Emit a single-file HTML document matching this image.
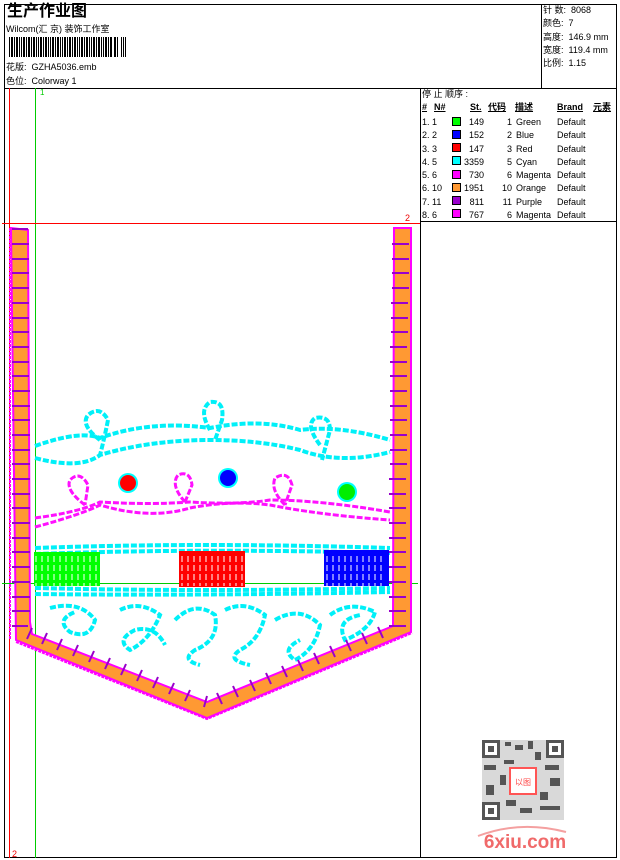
<!DOCTYPE html>
<html><head><meta charset="utf-8"><style>
*{margin:0;padding:0}
body{width:620px;height:860px;background:#fff;position:relative;overflow:hidden;font-family:"Liberation Sans","Noto Sans CJK SC",sans-serif;font-size:9px;color:#000}
.t{position:absolute;white-space:nowrap;line-height:11px}
svg{position:absolute;left:0;top:0}
</style></head><body>
<svg width="620" height="860" viewBox="0 0 620 860" shape-rendering="crispEdges">
<g fill="none" stroke="#000" stroke-width="1">
<rect x="4.5" y="4.5" width="612" height="853"/>
<line x1="4" y1="88.5" x2="617" y2="88.5"/>
<line x1="541.5" y1="4" x2="541.5" y2="88"/>
<line x1="420.5" y1="88" x2="420.5" y2="858"/>
<line x1="420" y1="221.5" x2="617" y2="221.5"/>
</g>
<line x1="9.5" y1="88" x2="9.5" y2="858" stroke="#f00"/>
<line x1="35.5" y1="88" x2="35.5" y2="858" stroke="#0c0"/>
<line x1="2" y1="223.5" x2="420" y2="223.5" stroke="#f00"/>
<line x1="2" y1="583.5" x2="418" y2="583.5" stroke="#0c0"/>
<g fill="#000">
<rect x="9" y="37" width="1" height="20"/><rect x="11" y="37" width="2" height="20"/><rect x="14" y="37" width="1" height="20"/><rect x="16" y="37" width="2" height="20"/><rect x="19" y="37" width="1" height="20"/><rect x="21" y="37" width="1" height="20"/><rect x="23" y="37" width="2" height="20"/><rect x="26" y="37" width="1" height="20"/><rect x="28" y="37" width="2" height="20"/><rect x="31" y="37" width="1" height="20"/><rect x="33" y="37" width="2" height="20"/><rect x="36" y="37" width="1" height="20"/><rect x="38" y="37" width="1" height="20"/><rect x="40" y="37" width="2" height="20"/><rect x="43" y="37" width="1" height="20"/><rect x="45" y="37" width="2" height="20"/><rect x="48" y="37" width="1" height="20"/><rect x="50" y="37" width="1" height="20"/><rect x="52" y="37" width="2" height="20"/><rect x="55" y="37" width="1" height="20"/><rect x="57" y="37" width="2" height="20"/><rect x="60" y="37" width="1" height="20"/><rect x="62" y="37" width="1" height="20"/><rect x="64" y="37" width="2" height="20"/><rect x="67" y="37" width="1" height="20"/><rect x="69" y="37" width="2" height="20"/><rect x="72" y="37" width="1" height="20"/><rect x="74" y="37" width="2" height="20"/><rect x="77" y="37" width="1" height="20"/><rect x="79" y="37" width="1" height="20"/><rect x="81" y="37" width="2" height="20"/><rect x="84" y="37" width="1" height="20"/><rect x="86" y="37" width="2" height="20"/><rect x="89" y="37" width="1" height="20"/><rect x="91" y="37" width="1" height="20"/><rect x="93" y="37" width="2" height="20"/><rect x="96" y="37" width="1" height="20"/><rect x="98" y="37" width="2" height="20"/><rect x="101" y="37" width="1" height="20"/><rect x="103" y="37" width="1" height="20"/><rect x="105" y="37" width="2" height="20"/><rect x="108" y="37" width="1" height="20"/><rect x="110" y="37" width="2" height="20"/><rect x="114" y="37" width="2" height="20"/><rect x="117" y="37" width="1" height="20"/><rect x="121" y="37" width="1" height="20"/><rect x="123" y="37" width="1" height="20"/><rect x="125" y="37" width="1" height="20"/>
</g>
<g stroke="#000" stroke-width="1">
<rect x="452.5" y="117.5" width="8" height="8" fill="#00ff00"/>
<rect x="452.5" y="130.5" width="8" height="8" fill="#0000ff"/>
<rect x="452.5" y="143.5" width="8" height="8" fill="#ff0000"/>
<rect x="452.5" y="156.5" width="8" height="8" fill="#00ffff"/>
<rect x="452.5" y="170.5" width="8" height="8" fill="#ff00ff"/>
<rect x="452.5" y="183.5" width="8" height="8" fill="#ff9933"/>
<rect x="452.5" y="196.5" width="8" height="8" fill="#9900cc"/>
<rect x="452.5" y="209.5" width="8" height="8" fill="#ff00ff"/>
</g>
<g shape-rendering="auto">
<g fill="none" stroke="#00f0f8" stroke-width="4" stroke-dasharray="6 2">
<path d="M35 446 Q80 430 100 438 Q150 420 210 428 Q260 418 300 430 Q340 425 390 440"/>
<path d="M35 458 Q80 470 100 455 Q150 440 210 440 Q260 440 300 450 Q340 465 390 452"/>
<path d="M100 440 Q80 425 88 415 Q100 405 108 420 Q104 440 100 455"/>
<path d="M210 430 Q198 410 210 402 Q225 400 222 420 L215 440"/>
<path d="M320 445 Q305 425 315 418 Q330 415 330 430 L322 460"/>
<path d="M35 548 Q200 542 390 548 M35 554 Q200 548 390 553"/>
<path d="M35 588 Q200 592 390 588 M35 594 Q200 596 390 592"/>
<path d="M50 608 Q80 600 95 620 Q90 640 70 632 Q55 620 75 612"/>
<path d="M120 610 Q140 600 160 615 Q150 640 130 650 Q115 640 135 630 Q155 625 165 645"/>
<path d="M175 620 Q195 600 215 615 Q220 640 195 650 Q180 660 200 665"/>
<path d="M225 610 Q245 600 265 615 Q260 640 240 650 Q225 660 250 665"/>
<path d="M275 620 Q300 605 320 625 Q315 650 295 660 Q280 650 300 640"/>
<path d="M330 615 Q350 600 375 612 Q370 630 345 640 Q335 620 360 615"/>
</g>
<g fill="none" stroke="#ff10ff" stroke-width="3" stroke-dasharray="6 2">
<path d="M35 527 Q80 515 100 505 Q150 520 190 508 Q230 500 270 505 Q320 515 390 520"/>
<path d="M35 518 Q80 512 100 502 Q150 505 190 502 Q240 505 270 500 Q320 500 390 512"/>
<path d="M85 505 Q65 490 70 480 Q80 470 88 485 L85 505"/>
<path d="M185 502 Q170 485 178 475 Q190 470 192 485 L185 502"/>
<path d="M285 505 Q270 490 275 478 Q288 470 292 485 L285 505"/>
</g>
<circle cx="128" cy="483" r="10" fill="#00ffff"/><circle cx="128" cy="483" r="8" fill="#ff0000"/>
<circle cx="228" cy="478" r="10" fill="#00ffff"/><circle cx="228" cy="478" r="8" fill="#0000ff"/>
<circle cx="347" cy="492" r="10" fill="#00ffff"/><circle cx="347" cy="492" r="8" fill="#00ee00"/>
</g>
<rect x="34" y="552" width="66" height="34" fill="#00ff00"/>
<rect x="179" y="551" width="66" height="36" fill="#ff0000"/>
<rect x="324" y="550" width="65" height="36" fill="#0000ff"/>
<g stroke="#fff" stroke-width="1" stroke-dasharray="6 3">
<path d="M36 556V586M42 556V586M48 556V586M54 556V586M60 556V586M66 556V586M72 556V586M78 556V586M84 556V586M90 556V586M96 556V586"/>
<path d="M182 556V586M188 556V586M194 556V586M200 556V586M206 556V586M212 556V586M218 556V586M224 556V586M230 556V586M236 556V586M242 556V586"/>
<path d="M327 556V586M333 556V586M339 556V586M345 556V586M351 556V586M357 556V586M363 556V586M369 556V586M375 556V586M381 556V586"/>
</g>
<g shape-rendering="auto">
<path d="M11 228 L28 230 L30 622 L32 634 L207 702 L393 626 L394 228 L411 228 L411 632 L207 718 L16 640 Z" fill="#ff9933" stroke="#ff00ff" stroke-width="2"/>
<path d="M10 228 L10 640 M411 228 L411 632 M16 642 L207 719 L412 633" stroke="#ff00ff" stroke-width="2" fill="none" stroke-dasharray="3 1"/>
<g stroke="#9900cc" stroke-width="2">
<path d="M12 229h16M12 244h17M12 259h17M12 273h17M12 288h17M12 303h17M12 318h17M12 332h17M12 347h17M12 362h17M12 376h17M12 391h18M12 406h18M12 420h18M12 435h18M12 450h18M12 464h18M12 479h18M12 494h18M12 508h18M12 523h18M12 538h18M12 552h18M12 567h18M12 582h18M12 597h18M12 611h18M12 626h16"/>
<path d="M392 244h17M392 259h17M392 273h17M392 288h17M391 303h17M391 318h17M391 332h17M390 347h17M390 362h17M390 376h17M390 391h17M390 406h17M390 420h17M390 435h17M390 450h17M390 464h17M389 479h17M389 494h17M389 508h17M389 523h17M389 538h17M389 552h17M389 567h17M389 582h17M389 597h17M389 611h17M389 626h17"/>
<path d="M32 628l-5 11M47 633l-5 11M62 639l-5 11M78 645l-5 11M94 651l-5 11M110 658l-5 11M126 664l-5 11M142 670l-5 11M158 677l-5 11M174 683l-5 11M190 690l-5 11M207 696l-3 11"/>
<path d="M217 693l5 11M233 686l5 11M250 680l5 11M266 673l5 11M282 666l5 11M298 660l5 11M314 653l5 11M330 646l5 11M346 640l5 11M362 633l5 11M378 627l5 11"/>
</g>
</g>
<g fill="#555">
<rect x="482" y="740" width="82" height="80" fill="#666" opacity="0.25"/>
<rect x="482" y="740" width="18" height="18"/><rect x="485" y="743" width="12" height="12" fill="#fff"/><rect x="488" y="746" width="6" height="6"/>
<rect x="546" y="740" width="18" height="18"/><rect x="549" y="743" width="12" height="12" fill="#fff"/><rect x="552" y="746" width="6" height="6"/>
<rect x="482" y="802" width="18" height="18"/><rect x="485" y="805" width="12" height="12" fill="#fff"/><rect x="488" y="808" width="6" height="6"/>
<rect x="505" y="742" width="6" height="4"/><rect x="515" y="745" width="8" height="5"/><rect x="528" y="741" width="5" height="8"/><rect x="504" y="760" width="10" height="4"/><rect x="484" y="765" width="12" height="5"/><rect x="500" y="775" width="6" height="10"/><rect x="545" y="765" width="14" height="5"/><rect x="550" y="778" width="10" height="8"/><rect x="540" y="792" width="8" height="8"/><rect x="506" y="800" width="10" height="6"/><rect x="520" y="808" width="12" height="5"/><rect x="540" y="806" width="20" height="4"/><rect x="486" y="785" width="8" height="10"/><rect x="535" y="752" width="6" height="8"/>
</g>
<rect x="510" y="768" width="26" height="26" fill="#fff" stroke="#ff5555" stroke-width="2"/>
<text x="523" y="785" font-size="8" fill="#ff4444" text-anchor="middle" font-family="Noto Sans CJK SC">以图</text>
<path d="M478 836 Q520 820 566 832" stroke="#f4a0a0" stroke-width="2" fill="none" shape-rendering="auto"/>
<text x="525" y="848" font-size="19" font-weight="bold" fill="#f06a6a" text-anchor="middle" font-family="Liberation Sans">6xiu.com</text>
<text x="40" y="95" font-size="8" fill="#0c0">1</text>
<text x="405" y="221" font-size="9" fill="#e00">2</text>
<text x="12" y="857" font-size="9" fill="#e00">2</text>
</svg>
<div class="t" style="left:7px;top:3px;font-size:16px;line-height:18px;font-weight:bold">生产作业图</div>
<div class="t" style="left:6px;top:24px">Wilcom(汇 京) 装饰工作室</div>
<div class="t" style="left:6px;top:62px">花版:&nbsp; GZHA5036.emb</div>
<div class="t" style="left:6px;top:76px">色位:&nbsp; Colorway 1</div>
<div class="t" style="left:543px;top:5px">针 数:&nbsp; 8068</div>
<div class="t" style="left:543px;top:18px">颜色:&nbsp; 7</div>
<div class="t" style="left:543px;top:32px">高度:&nbsp; 146.9 mm</div>
<div class="t" style="left:543px;top:45px">宽度:&nbsp; 119.4 mm</div>
<div class="t" style="left:543px;top:58px">比例:&nbsp; 1.15</div>
<div class="t" style="left:422px;top:89px">停 止 顺序 :</div>
<div class="t" style="left:422px;top:102px;font-weight:bold;text-decoration:underline">#</div>
<div class="t" style="left:434px;top:102px;font-weight:bold;text-decoration:underline">N#</div>
<div class="t" style="left:470px;top:102px;font-weight:bold;text-decoration:underline">St.</div>
<div class="t" style="left:488px;top:102px;font-weight:bold;text-decoration:underline">代码</div>
<div class="t" style="left:515px;top:102px;font-weight:bold;text-decoration:underline">描述</div>
<div class="t" style="left:557px;top:102px;font-weight:bold;text-decoration:underline">Brand</div>
<div class="t" style="left:593px;top:102px;font-weight:bold;text-decoration:underline">元素</div>
<div style="position:absolute;left:422px;top:116px;line-height:13.3px">
1. 1<br>2. 2<br>3. 3<br>4. 5<br>5. 6<br>6. 10<br>7. 11<br>8. 6</div>
<div style="position:absolute;left:462px;width:22px;text-align:right;top:116px;line-height:13.3px">149<br>152<br>147<br>3359<br>730<br>1951<br>811<br>767</div>
<div style="position:absolute;left:496px;width:16px;text-align:right;top:116px;line-height:13.3px">1<br>2<br>3<br>5<br>6<br>10<br>11<br>6</div>
<div style="position:absolute;left:516px;top:116px;line-height:13.3px">Green<br>Blue<br>Red<br>Cyan<br>Magenta<br>Orange<br>Purple<br>Magenta</div>
<div style="position:absolute;left:557px;top:116px;line-height:13.3px">Default<br>Default<br>Default<br>Default<br>Default<br>Default<br>Default<br>Default</div>
</body></html>
